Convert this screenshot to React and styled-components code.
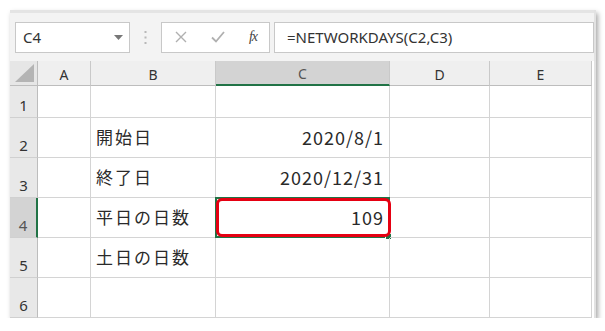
import React from "react";
import styled, { createGlobalStyle } from "styled-components";

const GlobalStyle = createGlobalStyle`
  body {
    margin: 0;
    background: #ffffff;
    font-family: "Noto Sans CJK JP", "Noto Sans", sans-serif;
  }
`;

const columns = ["A", "B", "C", "D", "E"];
const colWidths = "28px 53px 125px 174px 100px 102px";

const rows = [
  { n: 1, h: 32, b: "", c: "" },
  { n: 2, h: 40, b: "開始日", c: "2020/8/1" },
  { n: 3, h: 40, b: "終了日", c: "2020/12/31" },
  { n: 4, h: 40, b: "平日の日数", c: "109" },
  { n: 5, h: 40, b: "土日の日数", c: "" },
  { n: 6, h: 40, b: "", c: "" },
];

const Page = styled.div`
  padding: 10px 0 0 10px;
`;

const Window = styled.div`
  width: 584px;
  background: #f3f3f3;
  border-right: 2px solid #e2e2e2;
  box-shadow: 2px 3px 5px rgba(0, 0, 0, 0.35);
`;

const Toolbar = styled.div`
  height: 51px;
  display: flex;
  align-items: center;
  padding: 0 0 0 5px;
  border-top: 3px solid #e4e4e4;
  box-sizing: border-box;
`;

const Box = styled.div`
  height: 31px;
  box-sizing: border-box;
  background: #ffffff;
  border: 1px solid #c8c8c8;
  display: flex;
  align-items: center;
  width: ${(p) => p.$w};
  flex: ${(p) => (p.$grow ? 1 : "none")};
  margin-left: ${(p) => p.$ml || "0"};
  padding: ${(p) => p.$pad || "0"};
  justify-content: ${(p) => p.$justify || "flex-start"};
  color: #333;
  font-family: "Noto Sans", "Noto Sans CJK JP", sans-serif;
  font-size: 15px;
`;

const NameText = styled.span`
  flex: 1;
`;

const Dots = styled.div`
  width: 31px;
  display: flex;
  justify-content: center;
  padding-right: 1px;
  box-sizing: border-box;
`;

const Fx = styled.span`
  font-family: "Liberation Serif", serif;
  font-style: italic;
  font-size: 14px;
  color: #444;
  letter-spacing: -1px;
`;

const Sheet = styled.div`
  display: grid;
  grid-template-columns: ${colWidths};
  background: #ffffff;
  font-family: "Noto Sans CJK JP", "Noto Sans", sans-serif;
`;

const Corner = styled.div`
  height: 25px;
  background: #e6e6e6;
  border-right: 1px solid #bdbdbd;
  border-bottom: 1px solid #bdbdbd;
  box-sizing: border-box;
  display: flex;
  align-items: flex-end;
  justify-content: flex-end;
  padding: 0 3px 3px 0;
`;

const ColHead = styled.div`
  height: 25px;
  box-sizing: border-box;
  background: ${(p) => (p.$active ? "#d3d3d3" : "#efefef")};
  border-right: 1px solid #c9c9c9;
  border-bottom: ${(p) => (p.$active ? "2px solid #217346" : "1px solid #bdbdbd")};
  display: flex;
  align-items: center;
  justify-content: center;
  font-family: "Noto Sans", sans-serif;
  font-size: 14px;
  color: ${(p) => (p.$active ? "#555" : "#333")};
  padding-top: 2px;
`;

const RowHead = styled.div`
  height: ${(p) => p.$h}px;
  box-sizing: border-box;
  background: ${(p) => (p.$active ? "#d3d3d3" : "#e8e8e8")};
  border-right: ${(p) => (p.$active ? "2px solid #217346" : "1px solid #bdbdbd")};
  border-bottom: 1px solid #d0d0d0;
  display: flex;
  align-items: flex-end;
  justify-content: center;
  padding-bottom: 2px;
  font-family: "Noto Sans", sans-serif;
  font-size: 15px;
  color: ${(p) => (p.$active ? "#555" : "#333")};
`;

const Cell = styled.div`
  position: relative;
  height: ${(p) => p.$h}px;
  box-sizing: border-box;
  border-right: 1px solid #d4d4d4;
  border-bottom: 1px solid #d4d4d4;
  display: flex;
  align-items: flex-end;
  justify-content: ${(p) => (p.$right ? "flex-end" : "flex-start")};
  padding: ${(p) => (p.$right ? "0 5px 7px 5px" : "0 6px 8px 5px")};
  font-size: ${(p) => (p.$right ? "18px" : "17px")};
  color: #2a2a2a;
  letter-spacing: ${(p) => (p.$right ? "1px" : "2px")};
`;

const Selection = styled.div`
  position: absolute;
  left: -1px;
  top: -1px;
  right: -1px;
  bottom: -1px;
  border: 2px solid #217346;
`;

const Handle = styled.div`
  position: absolute;
  right: -4px;
  bottom: -4px;
  width: 5px;
  height: 5px;
  background: #217346;
  border: 1px solid #ffffff;
`;

const Highlight = styled.div`
  position: absolute;
  left: 0;
  top: 0;
  right: -2px;
  bottom: 0;
  border: 3px solid #e50012;
  border-radius: 6px;
`;

const CellText = styled.span`
  position: relative;
`;

function DotsIcon() {
  return (
    <svg width="3" height="13" viewBox="0 0 3 13">
      <rect x="0.5" y="0" width="2" height="2" fill="#b8b8b8" />
      <rect x="0.5" y="5.5" width="2" height="2" fill="#b8b8b8" />
      <rect x="0.5" y="11" width="2" height="2" fill="#b8b8b8" />
    </svg>
  );
}

function CornerTriangle() {
  return (
    <svg width="19" height="18" viewBox="0 0 19 18">
      <polygon points="19,0 19,18 0,18" fill="#b4b4b4" />
    </svg>
  );
}

const App = () => {
  return (
    <Page>
      <GlobalStyle />
      <Window>
        <Toolbar>
          <Box $w="115px" $pad="0 6px 0 7px">
            <NameText>C4</NameText>
            <svg width="9" height="5" viewBox="0 0 9 5">
              <polygon points="0,0 9,0 4.5,5" fill="#777" />
            </svg>
          </Box>
          <Dots>
            <DotsIcon />
          </Dots>
          <Box $w="109px" $pad="0 12px 0 13px" $justify="space-between">
            <svg width="12" height="12" viewBox="0 0 12 12">
              <path d="M1 1 L11 11 M11 1 L1 11" stroke="#b0b0b0" strokeWidth="1.4" />
            </svg>
            <svg width="14" height="12" viewBox="0 0 14 12">
              <path d="M1 6.5 L5 10.5 L13 1" stroke="#b0b0b0" strokeWidth="1.8" fill="none" />
            </svg>
            <Fx>fx</Fx>
          </Box>
          <Box $grow $ml="4px" $pad="0 0 0 12px">
            =NETWORKDAYS(C2,C3)
          </Box>
        </Toolbar>
        <Sheet>
          <Corner>
            <CornerTriangle />
          </Corner>
          {columns.map((c) => (
            <ColHead key={c} $active={c === "C"}>
              {c}
            </ColHead>
          ))}
          {rows.map((r) => (
            <React.Fragment key={r.n}>
              <RowHead $h={r.h} $active={r.n === 4}>
                {r.n}
              </RowHead>
              <Cell $h={r.h} />
              <Cell $h={r.h}>{r.b}</Cell>
              <Cell $h={r.h} $right>
                {r.n === 4 && (
                  <>
                    <Selection>
                      <Handle />
                    </Selection>
                    <Highlight />
                  </>
                )}
                <CellText>{r.c}</CellText>
              </Cell>
              <Cell $h={r.h} />
              <Cell $h={r.h} />
            </React.Fragment>
          ))}
        </Sheet>
      </Window>
    </Page>
  );
};

export default App;
